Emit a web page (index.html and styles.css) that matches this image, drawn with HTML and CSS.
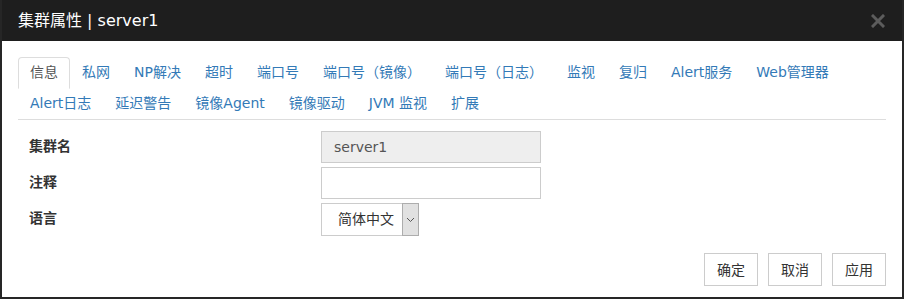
FILE: index.html
```
<!DOCTYPE html>
<html lang="zh-CN">
<head>
<meta charset="utf-8">
<title>集群属性</title>
<link rel="stylesheet" href="styles.css">
</head>
<body>
<div class="dialog">
  <div class="header">
    <div class="title">集群属性 | server1</div>
    <svg class="close" width="14" height="14" viewBox="0 0 14 14"><path d="M2 2 L12 12 M12 2 L2 12" stroke="#5c5c5c" stroke-width="3" stroke-linecap="square"/></svg>
  </div>
  <div class="content">
    <ul class="tabs">
      <li class="tab active">信息</li>
      <li class="tab">私网</li>
      <li class="tab">NP解决</li>
      <li class="tab">超时</li>
      <li class="tab">端口号</li>
      <li class="tab">端口号（镜像）</li>
      <li class="tab">端口号（日志）</li>
      <li class="tab">监视</li>
      <li class="tab">复归</li>
      <li class="tab">Alert服务</li>
      <li class="tab">Web管理器</li>
      <li class="tab">Alert日志</li>
      <li class="tab">延迟警告</li>
      <li class="tab">镜像Agent</li>
      <li class="tab">镜像驱动</li>
      <li class="tab">JVM 监视</li>
      <li class="tab">扩展</li>
    </ul>
    <div class="form">
      <div class="label">集群名</div>
      <div class="input readonly">server1</div>
      <div class="label">注释</div>
      <div class="input"></div>
      <div class="label">语言</div>
      <div class="select"><span class="select-text">简体中文</span><span class="arrow"><svg width="9" height="6" viewBox="0 0 9 6"><path d="M1 1 L4.5 4.5 L8 1" fill="none" stroke="#555" stroke-width="1"/></svg></span></div>
    </div>
    <div class="actions">
      <button class="btn">确定</button>
      <button class="btn">取消</button>
      <button class="btn">应用</button>
    </div>
  </div>
</div>
</body>
</html>
```
FILE: styles.css
```
* { box-sizing: border-box; }
html, body { margin: 0; padding: 0; background: #fff; }
body {
  font-family: "DejaVu Sans", "Noto Sans CJK SC", sans-serif;
  font-size: 14px;
  color: #333;
}
.dialog {
  width: 904px;
  height: 299px;
  border: 2px solid #262626;
  border-top: none;
  display: flex;
  flex-direction: column;
}
.header {
  height: 41px;
  background: #1e1e1e;
  display: flex;
  align-items: center;
  justify-content: space-between;
  padding: 0 17px 0 16px;
  color: #fff;
}
.title { font-size: 16px; line-height: 20px; }
.close { display: block; margin-top: 1px; }
.content {
  flex: 1;
  padding: 16px 16px 11px 16px;
  display: flex;
  flex-direction: column;
}
.tabs {
  list-style: none;
  margin: 0;
  padding: 0;
  display: flex;
  flex-wrap: wrap;
  border-bottom: 1px solid #ddd;
}
.tab {
  padding: 4px 11px 6px;
  line-height: 20px;
  border: 1px solid transparent;
  border-radius: 4px 4px 0 0;
  margin-bottom: -1px;
  color: #337ab7;
  white-space: pre;
}
.tab.active {
  color: #555;
  border-color: #ddd;
  border-bottom-color: #fff;
}
.form {
  margin-top: 11px;
  padding-left: 11px;
  display: grid;
  grid-template-columns: 292px 220px;
  row-gap: 4px;
  align-items: center;
}
.label { font-weight: bold; color: #333; line-height: 20px; margin-top: -3px; }
.input {
  height: 32px;
  border: 1px solid #ccc;
  padding: 0 12px;
  line-height: 30px;
  color: #555;
  background: #fff;
}
.input.readonly { background: #eee; }
.select {
  width: 98px;
  height: 33px;
  border: 1px solid #ccc;
  display: flex;
  color: #333;
  background: #fff;
}
.select-text { flex: 1; padding-left: 16px; line-height: 31px; }
.arrow {
  width: 17px;
  background: #e1e1e1;
  border: 1px solid #adadad;
  margin: -1px -1px -1px 0;
  display: flex;
  align-items: center;
  justify-content: center;
}
.actions {
  margin-top: auto;
  display: flex;
  justify-content: flex-end;
  gap: 10px;
}
.btn {
  font-family: inherit;
  font-size: 14px;
  color: #333;
  background: #fff;
  border: 1px solid #ccc;
  width: 54px;
  height: 33px;
  padding: 0;
  line-height: 20px;
}
```
